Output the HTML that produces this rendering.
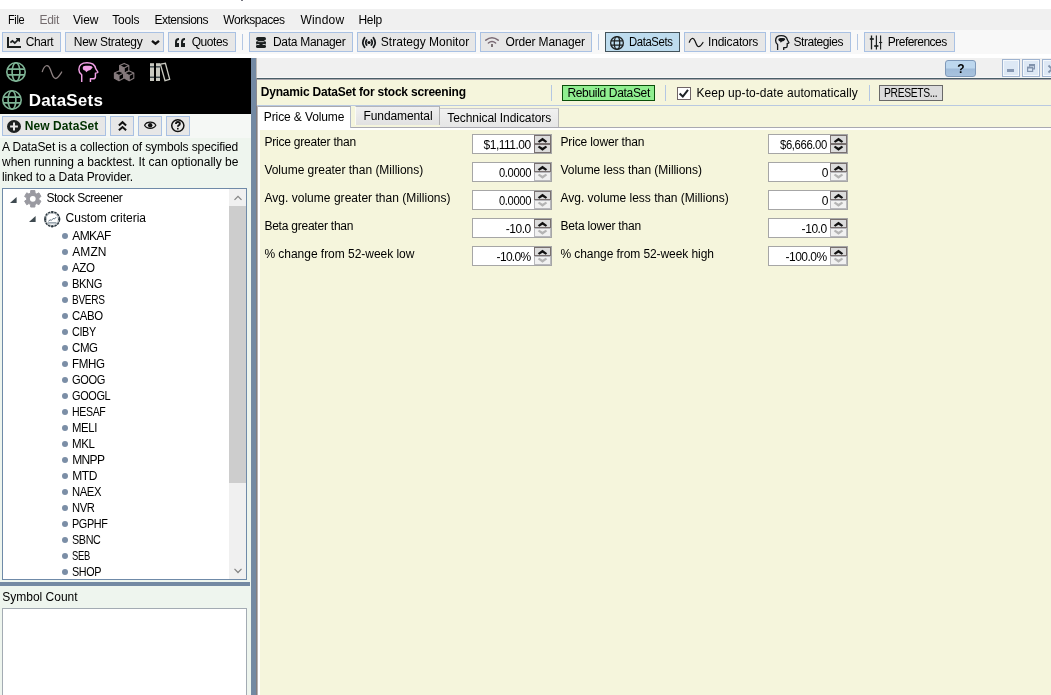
<!DOCTYPE html>
<html lang="en">
<head>
<meta charset="utf-8">
<title>DataSets - Stock Screener</title>
<style>
html,body{margin:0;padding:0}
body{width:1051px;height:695px;position:relative;overflow:hidden;background:#fff;font:12px/16px "Liberation Sans",sans-serif;color:#000}
.a{position:absolute;box-sizing:border-box}
.t{position:absolute;white-space:nowrap;line-height:16px}
.tb{position:absolute;box-sizing:border-box;top:32px;height:20px;border:1px solid #a9c1e3;background:#e7e7e7}
.tb.on{border-color:#43535b;background:#bedcee}
.sep{position:absolute;width:1px;background:#b4c7e3}
.lb{position:absolute;box-sizing:border-box;top:116px;height:20px;border:1px solid #a9c1e3;background:#e7e7e7}
svg{position:absolute;overflow:visible}
.spin{position:absolute;box-sizing:border-box;width:80px;height:20px;border:1px solid #a6a6a6;background:#fff}
.spin i{position:absolute;left:61px;width:17px;height:9px;background:#d4d0c8;box-sizing:border-box}
</style>
</head>
<body>
<div class="a" style="left:241px;top:0;width:2px;height:1px;background:#777780"></div>
<!-- menu bar -->
<div class="a" style="left:0;top:9px;width:1051px;height:21px;background:#f0f0f0"></div>
<!-- main toolbar -->
<div class="a" style="left:0;top:30px;width:1051px;height:24px;background:#f8f8f8"></div>
<div class="tb" style="left:2px;width:59px"></div>
<div class="tb" style="left:65px;width:99px"></div>
<div class="tb" style="left:168px;width:68px"></div>
<div class="sep" style="left:242px;top:34px;height:16px"></div>
<div class="tb" style="left:249px;width:104px"></div>
<div class="tb" style="left:357px;width:119px"></div>
<div class="tb" style="left:480px;width:112px"></div>
<div class="sep" style="left:598px;top:34px;height:16px"></div>
<div class="tb on" style="left:605px;width:75px"></div>
<div class="tb" style="left:684px;width:82px"></div>
<div class="tb" style="left:770px;width:81px"></div>
<div class="sep" style="left:857px;top:34px;height:16px"></div>
<div class="tb" style="left:864px;width:91px"></div>
<svg style="left:7px;top:37px" width="14" height="11" viewBox="0 0 14 11"><path d="M1,0 V10 H14" fill="none" stroke="#1b1f1f" stroke-width="2"/><path d="M3.4,5.6 L5.4,3.8 L7.8,6 L11.2,2.6" fill="none" stroke="#1b1f1f" stroke-width="1.7"/><path d="M9,1 H13 V4.8 H12 L9,1.8 Z" fill="#1b1f1f"/></svg>
<svg style="left:151px;top:40px" width="9" height="5" viewBox="0 0 9 5"><path d="M1,0.9 L4.5,3.7 L8,0.9" fill="none" stroke="#111" stroke-width="2.4"/></svg>
<svg style="left:175px;top:38px" width="10" height="9" viewBox="0 0 10 9"><path d="M0,9 H4 V5 H2 V4 Q2,2 4,2 V0 Q0,0 0,4 Z" fill="#1b1f1f"/><path d="M0,9 H4 V5 H2 V4 Q2,2 4,2 V0 Q0,0 0,4 Z" transform="translate(6,0)" fill="#1b1f1f"/></svg>
<svg style="left:256px;top:37px" width="10" height="11" viewBox="0 0 10 11"><g fill="#1b1f1f"><rect x="0" y="0" width="10" height="3.5" rx="1.7"/><rect x="1.8" y="3" width="6.4" height="1"/><rect x="0" y="4.3" width="10" height="2.9" rx="1.2"/><rect x="0.6" y="7" width="8.8" height="1"/><rect x="0" y="7.7" width="10" height="3.3" rx="1.6"/></g><rect x="2.2" y="4.4" width="5.6" height="0.7" fill="#e0e0e0"/><rect x="0.8" y="7.1" width="2.6" height="0.8" fill="#f0f0f0"/><rect x="6.6" y="7.1" width="2.6" height="0.8" fill="#f0f0f0"/></svg>
<svg style="left:362px;top:37px" width="14" height="11" viewBox="0 0 14 11"><circle cx="7" cy="5.5" r="1.6" fill="#111"/><g fill="none" stroke="#16191b" stroke-width="1.75" stroke-linecap="round"><path d="M4.6,3 Q3,5.5 4.6,8"/><path d="M9.4,3 Q11,5.5 9.4,8"/><path d="M2.6,0.7 Q-0.9,5.5 2.6,10.3"/><path d="M11.4,0.7 Q14.9,5.5 11.4,10.3"/></g></svg>
<svg style="left:485px;top:37px" width="14" height="10" viewBox="0 0 14 10"><g fill="none" stroke="#7a6a74" stroke-width="1.5" stroke-linecap="round"><path d="M0.8,3.2 Q7,-1.8 13.2,3.2"/><path d="M3.4,6 Q7,3 10.6,6"/></g><rect x="6.1" y="7" width="1.8" height="3" fill="#6f6468"/></svg>
<svg style="left:610px;top:35.5px" width="14" height="14" viewBox="0 0 14 14"><g fill="none" stroke="#1d2020" stroke-width="1.3"><circle cx="7.0" cy="7.0" r="6.35"/><ellipse cx="7.0" cy="7.0" rx="2.73" ry="6.35"/><path d="M0.84,4.970000000000001H13.16M0.84,9.03H13.16"/></g></svg>
<svg style="left:689px;top:38px" width="14.3" height="9" viewBox="0 0 14.3 9"><path d="M0.3,4.2299999999999995 C1.716,0.0 4.29,-1.08 6.006,2.88 C7.436000000000001,6.4799999999999995 8.58,10.080000000000002 11.154000000000002,8.1 C12.298,7.2 13.299000000000001,5.58 14.0,4.5" fill="none" stroke="#111" stroke-width="1.25" stroke-linecap="round"/></svg>
<svg style="left:775px;top:35px" width="14" height="15" viewBox="0 0 14 15"><g transform="scale(1.0,1.0)"><path d="M2.6,15 V9.6 Q0.6,8 0.6,5.6 Q0.6,0.6 6.3,0.6 Q11.6,0.6 12.4,5 L13.9,7.5 Q14,8.2 12.2,8.4 V11 Q12.2,12.6 10.6,12.6 H8.7 V15" fill="none" stroke="#16191b" stroke-width="1.3" stroke-linejoin="round"/><path d="M3.3,4.6 Q3.3,2.9 5.4,2.9 H8 Q10,2.9 10.3,4.2 Q9,6.4 7,6.5 L5.7,7.7 L5.2,6.5 Q3.3,6.3 3.3,4.6 Z" fill="#16191b"/></g></svg>
<svg style="left:869px;top:35px" width="14" height="15" viewBox="0 0 14 15"><g stroke="#1b1f1f" fill="none"><path d="M2.5,0.5V14.4" stroke-width="1.3"/><path d="M7.4,0.5V14.4" stroke-width="1.2"/><path d="M11.6,0.5V14.4" stroke-width="1.1"/><path d="M0.8,4H4.8" stroke-width="1.7"/><path d="M5.2,11H9.4" stroke-width="1.7"/><path d="M10,7.5H13.2" stroke-width="1.1"/></g></svg>

<!-- left panel -->
<div class="a" style="left:0;top:58px;width:251px;height:56px;background:#000"></div>
<div class="a" style="left:0;top:114px;width:251px;height:24px;background:#f5f8f5"></div>
<div class="a" style="left:0;top:138px;width:251px;height:557px;background:#eef5ee"></div>
<div class="lb" style="left:2px;width:104px"></div>
<div class="lb" style="left:110px;width:24px"></div>
<div class="lb" style="left:138px;width:24px"></div>
<div class="lb" style="left:166px;width:24px"></div>
<svg style="left:6px;top:62px" width="20" height="20" viewBox="0 0 20 20"><g fill="none" stroke="#7fb596" stroke-width="1.6"><circle cx="10.0" cy="10.0" r="9.2"/><ellipse cx="10.0" cy="10.0" rx="3.9" ry="9.2"/><path d="M1.2,7.1H18.8M1.2,12.9H18.8"/></g></svg>
<svg style="left:42px;top:65px" width="20" height="14" viewBox="0 0 20 14"><path d="M0.3,6.58 C2.4,0.0 6.0,-1.68 8.4,4.48 C10.4,10.08 12.0,15.680000000000001 15.600000000000001,12.6 C17.2,11.200000000000001 18.6,8.68 19.7,7.0" fill="none" stroke="#8e8282" stroke-width="1.3" stroke-linecap="round"/></svg>
<svg style="left:78px;top:62px" width="20" height="20" viewBox="0 0 20 20"><g transform="scale(1.4285714285714286,1.3333333333333333)"><path d="M2.6,15 V9.6 Q0.6,8 0.6,5.6 Q0.6,0.6 6.3,0.6 Q11.6,0.6 12.4,5 L13.9,7.5 Q14,8.2 12.2,8.4 V11 Q12.2,12.6 10.6,12.6 H8.7 V15" fill="none" stroke="#f2a0e6" stroke-width="1.0150000000000001" stroke-linejoin="round"/><path d="M3.3,4.6 Q3.3,2.9 5.4,2.9 H8 Q10,2.9 10.3,4.2 Q9,6.4 7,6.5 L5.7,7.7 L5.2,6.5 Q3.3,6.3 3.3,4.6 Z" fill="#f2a0e6"/></g></svg>
<svg style="left:114px;top:63px" width="20" height="18" viewBox="0 0 20 18"><path d="M10.2,0.4 L14.799999999999999,2.6 V7.8 L10.2,10.2 L5.6,7.8 V2.6 Z" fill="#000"/><path d="M5.6,2.6 L10.2,5 V10.2 L5.6,7.8 Z" fill="#857a7c"/><path d="M10.2,0.4 L14.799999999999999,2.6 V7.8 L10.2,10.2 L5.6,7.8 V2.6 Z M5.6,2.6 L10.2,5 L14.799999999999999,2.6 M10.2,5 V10.2" fill="none" stroke="#857a7c" stroke-width="1.1" stroke-linejoin="round"/><path d="M5,7.9 L9.6,10.1 V15.3 L5,17.7 L0.40000000000000036,15.3 V10.1 Z" fill="#000"/><path d="M0.40000000000000036,10.1 L5,12.5 V17.7 L0.40000000000000036,15.3 Z" fill="#857a7c"/><path d="M5,7.9 L9.6,10.1 V15.3 L5,17.7 L0.40000000000000036,15.3 V10.1 Z M0.40000000000000036,10.1 L5,12.5 L9.6,10.1 M5,12.5 V17.7" fill="none" stroke="#857a7c" stroke-width="1.1" stroke-linejoin="round"/><path d="M15.2,7.9 L19.799999999999997,10.1 V15.3 L15.2,17.7 L10.6,15.3 V10.1 Z" fill="#000"/><path d="M10.6,10.1 L15.2,12.5 V17.7 L10.6,15.3 Z" fill="#857a7c"/><path d="M15.2,7.9 L19.799999999999997,10.1 V15.3 L15.2,17.7 L10.6,15.3 V10.1 Z M10.6,10.1 L15.2,12.5 L19.799999999999997,10.1 M15.2,12.5 V17.7" fill="none" stroke="#857a7c" stroke-width="1.1" stroke-linejoin="round"/></svg>
<svg style="left:150px;top:63px" width="20" height="18" viewBox="0 0 20 18"><rect x="0" y="0.2" width="4" height="17.8" fill="#c9c9c0"/><rect x="0" y="3.2" width="4" height="1.3" fill="#2f3a40"/><rect x="0" y="13.6" width="4" height="1.3" fill="#2f3a40"/><rect x="6" y="0.2" width="4" height="17.8" fill="#c9c9c0"/><rect x="6" y="3.2" width="4" height="1.3" fill="#2f3a40"/><rect x="6" y="13.6" width="4" height="1.3" fill="#2f3a40"/><path d="M10.4,1.2 L15.4,0.3 L19.7,16.4 L15,17.7 Z" fill="none" stroke="#c9c9c0" stroke-width="1.3"/></svg>
<svg style="left:2px;top:90px" width="20" height="20" viewBox="0 0 20 20"><g fill="none" stroke="#7fb596" stroke-width="1.6"><circle cx="10.0" cy="10.0" r="9.2"/><ellipse cx="10.0" cy="10.0" rx="3.9" ry="9.2"/><path d="M1.2,7.1H18.8M1.2,12.9H18.8"/></g></svg>
<svg style="left:7px;top:120px" width="14" height="13" viewBox="0 0 14 13"><ellipse cx="7" cy="6.5" rx="7" ry="6.5" fill="#1d2121"/><path d="M7,2.6V10.4M3.1,6.5H10.9" stroke="#e8e8e8" stroke-width="2"/></svg>
<svg style="left:117.5px;top:120.5px" width="9" height="10" viewBox="0 0 9 10"><path d="M0.9,4.5 L4.5,1.2 L8.1,4.5 M0.9,9.3 L4.5,6 L8.1,9.3" fill="none" stroke="#111" stroke-width="2"/></svg>
<svg style="left:144px;top:121.3px" width="12.4" height="8.4" viewBox="0 0 12.4 8.4"><path d="M0.6,4.2 C2.6,0.1 9.8,0.1 11.8,4.2 C9.8,8.3 2.6,8.3 0.6,4.2 Z" fill="none" stroke="#111" stroke-width="1.25"/><circle cx="6.2" cy="4.2" r="2.2" fill="#111"/></svg>
<svg style="left:171.3px;top:119.4px" width="13.6" height="13.2" viewBox="0 0 13.6 13.2"><ellipse cx="6.8" cy="6.6" rx="6.1" ry="5.9" fill="none" stroke="#111" stroke-width="1.5"/><path d="M4.9,5 Q4.9,3 6.9,3 Q8.9,3 8.9,4.7 Q8.9,5.8 7.6,6.4 Q6.9,6.8 6.9,7.8" fill="none" stroke="#111" stroke-width="1.8"/><rect x="6" y="8.9" width="1.6" height="1.6" fill="#111"/></svg>
<!-- tree -->
<div class="a" style="left:2px;top:188px;width:245px;height:392px;border:1px solid #6f8aa8;background:#fff"></div>
<div class="a" style="left:229px;top:189px;width:17px;height:390px;background:#f0f0f0"></div>
<div class="a" style="left:229px;top:206px;width:17px;height:277px;background:#cdcdcd"></div>
<svg style="left:10.3px;top:197px" width="7" height="6" viewBox="0 0 7 6"><path d="M0,6 H6.6 V0 Z" fill="#3f4a50"/></svg>
<svg style="left:29.4px;top:216px" width="7" height="6" viewBox="0 0 7 6"><path d="M0,6 H6.6 V0 Z" fill="#3f4a50"/></svg>
<svg style="left:24px;top:190.2px" width="17.6" height="17.6" viewBox="0 0 17.6 17.6"><path d="M6.62,3.00 L6.70,0.56 L10.90,0.56 L10.98,3.00 L12.73,4.01 L14.88,2.86 L16.98,6.50 L14.92,7.79 L14.92,9.81 L16.98,11.10 L14.88,14.74 L12.73,13.59 L10.98,14.60 L10.90,17.04 L6.70,17.04 L6.62,14.60 L4.87,13.59 L2.72,14.74 L0.62,11.10 L2.68,9.81 L2.68,7.79 L0.62,6.50 L2.72,2.86 L4.87,4.01 Z" fill="#9a9aa1" stroke="#9a9aa1" stroke-width="1" stroke-linejoin="round"/><circle cx="8.8" cy="8.8" r="2.9" fill="#fff"/></svg>
<svg style="left:43.8px;top:210.8px" width="16.4" height="16.4" viewBox="0 0 16.4 16.4"><circle cx="8.2" cy="8.2" r="7.3" fill="none" stroke="#2f3b43" stroke-width="1.5" stroke-dasharray="2.6 0.7"/><circle cx="8.2" cy="8.2" r="6.2" fill="none" stroke="#7f8b93" stroke-width="0.6"/><path d="M14.20,8.20 L16.20,8.20" stroke="#26323a" stroke-width="1.5"/><path d="M8.20,14.20 L8.20,16.20" stroke="#26323a" stroke-width="1.5"/><path d="M2.20,8.20 L0.20,8.20" stroke="#26323a" stroke-width="1.5"/><path d="M8.20,2.20 L8.20,0.20" stroke="#26323a" stroke-width="1.5"/><path d="M4.4,10.2 L6.2,8.8 L7.3,9.5 L9.2,7.4 L10.4,8 L12.2,6.1" fill="none" stroke="#4a6070" stroke-width="0.9"/><path d="M4.2,11.9 H12.4" stroke="#4a6070" stroke-width="0.9"/></svg>
<div class="a" style="left:62px;top:233px;width:6px;height:6px;border-radius:50%;background:#7b8ea6"></div>
<div class="a" style="left:62px;top:249px;width:6px;height:6px;border-radius:50%;background:#7b8ea6"></div>
<div class="a" style="left:62px;top:265px;width:6px;height:6px;border-radius:50%;background:#7b8ea6"></div>
<div class="a" style="left:62px;top:281px;width:6px;height:6px;border-radius:50%;background:#7b8ea6"></div>
<div class="a" style="left:62px;top:297px;width:6px;height:6px;border-radius:50%;background:#7b8ea6"></div>
<div class="a" style="left:62px;top:313px;width:6px;height:6px;border-radius:50%;background:#7b8ea6"></div>
<div class="a" style="left:62px;top:329px;width:6px;height:6px;border-radius:50%;background:#7b8ea6"></div>
<div class="a" style="left:62px;top:345px;width:6px;height:6px;border-radius:50%;background:#7b8ea6"></div>
<div class="a" style="left:62px;top:361px;width:6px;height:6px;border-radius:50%;background:#7b8ea6"></div>
<div class="a" style="left:62px;top:377px;width:6px;height:6px;border-radius:50%;background:#7b8ea6"></div>
<div class="a" style="left:62px;top:393px;width:6px;height:6px;border-radius:50%;background:#7b8ea6"></div>
<div class="a" style="left:62px;top:409px;width:6px;height:6px;border-radius:50%;background:#7b8ea6"></div>
<div class="a" style="left:62px;top:425px;width:6px;height:6px;border-radius:50%;background:#7b8ea6"></div>
<div class="a" style="left:62px;top:441px;width:6px;height:6px;border-radius:50%;background:#7b8ea6"></div>
<div class="a" style="left:62px;top:457px;width:6px;height:6px;border-radius:50%;background:#7b8ea6"></div>
<div class="a" style="left:62px;top:473px;width:6px;height:6px;border-radius:50%;background:#7b8ea6"></div>
<div class="a" style="left:62px;top:489px;width:6px;height:6px;border-radius:50%;background:#7b8ea6"></div>
<div class="a" style="left:62px;top:505px;width:6px;height:6px;border-radius:50%;background:#7b8ea6"></div>
<div class="a" style="left:62px;top:521px;width:6px;height:6px;border-radius:50%;background:#7b8ea6"></div>
<div class="a" style="left:62px;top:537px;width:6px;height:6px;border-radius:50%;background:#7b8ea6"></div>
<div class="a" style="left:62px;top:553px;width:6px;height:6px;border-radius:50%;background:#7b8ea6"></div>
<div class="a" style="left:62px;top:569px;width:6px;height:6px;border-radius:50%;background:#7b8ea6"></div>
<svg style="left:233.5px;top:195px" width="8" height="6" viewBox="0 0 8 6"><path d="M0.5,4.9 L4,1.3 L7.5,4.9" fill="none" stroke="#858585" stroke-width="1.25"/></svg>
<svg style="left:233.5px;top:568px" width="8" height="6" viewBox="0 0 8 6"><path d="M0.5,0.9 L4,4.5 L7.5,0.9" fill="none" stroke="#858585" stroke-width="1.25"/></svg>
<!-- splitters -->
<div class="a" style="left:0;top:581.6px;width:250px;height:4.6px;background:#7389a3"></div>
<div class="a" style="left:251px;top:58px;width:5px;height:637px;background:#7389a3"></div>
<div class="a" style="left:256px;top:58px;width:1px;height:20px;background:#bdb9b6"></div>
<div class="a" style="left:256px;top:78px;width:1px;height:28px;background:#8c8a90"></div>
<div class="a" style="left:256px;top:106px;width:1px;height:589px;background:#837d80"></div>
<!-- symbol count box -->
<div class="a" style="left:2px;top:608px;width:245px;height:100px;border:1px solid #a3abb3;background:#fff"></div>

<!-- right panel -->
<div class="a" style="left:257px;top:58px;width:794px;height:20px;background:#f0f0f0"></div>
<div class="a" style="left:257px;top:77px;width:794px;height:1px;background:#f7f7f7"></div>
<div class="a" style="left:257px;top:78px;width:794px;height:1px;background:#4a5e68"></div>
<div class="a" style="left:257px;top:79px;width:794px;height:616px;background:#f5f5dc"></div>
<div class="a" style="left:257px;top:79px;width:794px;height:1px;background:#a9a7ad"></div>
<div class="a" style="left:257px;top:105px;width:794px;height:1px;background:#b9c9e1"></div>
<div class="a" style="left:257px;top:127px;width:794px;height:1px;background:#a9a9b1"></div>
<div class="a" style="left:257px;top:128px;width:794px;height:2px;background:#fff"></div>
<div class="a" style="left:257px;top:106px;width:3px;height:589px;background:#fff"></div>
<!-- mdi buttons -->
<div class="a" style="left:945px;top:60px;width:31px;height:17px;border:1px solid #7f99b9;border-radius:3px;background:linear-gradient(#bdd7ee 0,#bdd7ee 48%,#9fbbd9 52%,#a9c3df 100%)"></div>
<div class="a" style="left:1002px;top:59px;width:18px;height:18px;border:1px solid #9fb3cf;background:#dde8f5;box-shadow:inset 0 0 0 1px #f4f8fc"></div>
<div class="a" style="left:1022px;top:59px;width:18px;height:18px;border:1px solid #9fb3cf;background:#dde8f5;box-shadow:inset 0 0 0 1px #f4f8fc"></div>
<div class="a" style="left:1042px;top:59px;width:18px;height:18px;border:1px solid #9fb3cf;background:#dde8f5;box-shadow:inset 0 0 0 1px #f4f8fc"></div>
<!-- header strip items -->
<div class="sep" style="left:551px;top:85px;height:16px"></div>
<div class="a" style="left:562px;top:85px;width:93px;height:16px;border:1px solid #0a4f0a;background:#90ee90"></div>
<div class="sep" style="left:665px;top:85px;height:16px"></div>
<div class="a" style="left:677px;top:87px;width:14px;height:13px;border:1px solid #6e6466;background:#fff"></div>
<div class="sep" style="left:869px;top:85px;height:16px"></div>
<div class="a" style="left:879px;top:85px;width:64px;height:16px;border:1px solid #696969;background:#dcdcdc"></div>
<!-- tabs -->
<div class="a" style="left:355px;top:106px;width:85px;height:19px;border-top:1px solid #b4b6bd;border-left:1px solid #fbfbf3;border-right:1px solid #b1b1b1;background:linear-gradient(#f0f0f0,#e1e1e1)"></div>
<div class="a" style="left:440px;top:108px;width:119px;height:19px;border-top:1px solid #c9c9cd;border-right:1px solid #b8b8b8;background:linear-gradient(#f1f1f1,#e6e6e6)"></div>
<div class="a" style="left:257px;top:106px;width:94px;height:22px;border-right:1px solid #b3bac8;border-top:1px solid #a9a9ad;background:#fff"></div>
<div class="a" style="left:257px;top:106px;width:1px;height:589px;background:#b5b1b3"></div>
<div class="spin" style="left:472px;top:134px"><div class="a" style="left:61px;top:0;width:17px;height:9px;border:1px solid #787070;background:#dcdcdc"></div><div class="a" style="left:61px;top:9px;width:17px;height:9px;border:1px solid #787070;background:#dcdcdc"></div><svg style="left:65px;top:2.8px" width="9" height="4.4" viewBox="0 0 9 4.4"><path d="M-0.2,3.2 L4.5,-0.3 L9.2,3.2 L7.8,4.7 L4.5,2.7 L1.2,4.7 Z" fill="#111"/></svg><svg style="left:65px;top:10.8px" width="9" height="4.4" viewBox="0 0 9 4.4"><path d="M-0.2,1.2 L4.5,4.7 L9.2,1.2 L7.8,-0.3 L4.5,1.7 L1.2,-0.3 Z" fill="#111"/></svg></div>
<div class="spin" style="left:472px;top:162px"><div class="a" style="left:61px;top:0;width:17px;height:9px;border:1px solid #787070;background:#dcdcdc"></div><div class="a" style="left:61px;top:9px;width:17px;height:9px;border:1px solid #b9b9bd;background:#f1f1f1"></div><svg style="left:65px;top:2.8px" width="9" height="4.4" viewBox="0 0 9 4.4"><path d="M-0.2,3.2 L4.5,-0.3 L9.2,3.2 L7.8,4.7 L4.5,2.7 L1.2,4.7 Z" fill="#111"/></svg><svg style="left:65px;top:10.8px" width="9" height="4.4" viewBox="0 0 9 4.4"><path d="M-0.2,1.2 L4.5,4.7 L9.2,1.2 L7.8,-0.3 L4.5,1.7 L1.2,-0.3 Z" fill="#b4b4b4"/></svg></div>
<div class="spin" style="left:472px;top:190px"><div class="a" style="left:61px;top:0;width:17px;height:9px;border:1px solid #787070;background:#dcdcdc"></div><div class="a" style="left:61px;top:9px;width:17px;height:9px;border:1px solid #b9b9bd;background:#f1f1f1"></div><svg style="left:65px;top:2.8px" width="9" height="4.4" viewBox="0 0 9 4.4"><path d="M-0.2,3.2 L4.5,-0.3 L9.2,3.2 L7.8,4.7 L4.5,2.7 L1.2,4.7 Z" fill="#111"/></svg><svg style="left:65px;top:10.8px" width="9" height="4.4" viewBox="0 0 9 4.4"><path d="M-0.2,1.2 L4.5,4.7 L9.2,1.2 L7.8,-0.3 L4.5,1.7 L1.2,-0.3 Z" fill="#b4b4b4"/></svg></div>
<div class="spin" style="left:472px;top:218px"><div class="a" style="left:61px;top:0;width:17px;height:9px;border:1px solid #787070;background:#dcdcdc"></div><div class="a" style="left:61px;top:9px;width:17px;height:9px;border:1px solid #b9b9bd;background:#f1f1f1"></div><svg style="left:65px;top:2.8px" width="9" height="4.4" viewBox="0 0 9 4.4"><path d="M-0.2,3.2 L4.5,-0.3 L9.2,3.2 L7.8,4.7 L4.5,2.7 L1.2,4.7 Z" fill="#111"/></svg><svg style="left:65px;top:10.8px" width="9" height="4.4" viewBox="0 0 9 4.4"><path d="M-0.2,1.2 L4.5,4.7 L9.2,1.2 L7.8,-0.3 L4.5,1.7 L1.2,-0.3 Z" fill="#b4b4b4"/></svg></div>
<div class="spin" style="left:472px;top:246px"><div class="a" style="left:61px;top:0;width:17px;height:9px;border:1px solid #787070;background:#dcdcdc"></div><div class="a" style="left:61px;top:9px;width:17px;height:9px;border:1px solid #b9b9bd;background:#f1f1f1"></div><svg style="left:65px;top:2.8px" width="9" height="4.4" viewBox="0 0 9 4.4"><path d="M-0.2,3.2 L4.5,-0.3 L9.2,3.2 L7.8,4.7 L4.5,2.7 L1.2,4.7 Z" fill="#111"/></svg><svg style="left:65px;top:10.8px" width="9" height="4.4" viewBox="0 0 9 4.4"><path d="M-0.2,1.2 L4.5,4.7 L9.2,1.2 L7.8,-0.3 L4.5,1.7 L1.2,-0.3 Z" fill="#b4b4b4"/></svg></div>
<div class="spin" style="left:768px;top:134px"><div class="a" style="left:61px;top:0;width:17px;height:9px;border:1px solid #787070;background:#dcdcdc"></div><div class="a" style="left:61px;top:9px;width:17px;height:9px;border:1px solid #787070;background:#dcdcdc"></div><svg style="left:65px;top:2.8px" width="9" height="4.4" viewBox="0 0 9 4.4"><path d="M-0.2,3.2 L4.5,-0.3 L9.2,3.2 L7.8,4.7 L4.5,2.7 L1.2,4.7 Z" fill="#111"/></svg><svg style="left:65px;top:10.8px" width="9" height="4.4" viewBox="0 0 9 4.4"><path d="M-0.2,1.2 L4.5,4.7 L9.2,1.2 L7.8,-0.3 L4.5,1.7 L1.2,-0.3 Z" fill="#111"/></svg></div>
<div class="spin" style="left:768px;top:162px"><div class="a" style="left:61px;top:0;width:17px;height:9px;border:1px solid #787070;background:#dcdcdc"></div><div class="a" style="left:61px;top:9px;width:17px;height:9px;border:1px solid #b9b9bd;background:#f1f1f1"></div><svg style="left:65px;top:2.8px" width="9" height="4.4" viewBox="0 0 9 4.4"><path d="M-0.2,3.2 L4.5,-0.3 L9.2,3.2 L7.8,4.7 L4.5,2.7 L1.2,4.7 Z" fill="#111"/></svg><svg style="left:65px;top:10.8px" width="9" height="4.4" viewBox="0 0 9 4.4"><path d="M-0.2,1.2 L4.5,4.7 L9.2,1.2 L7.8,-0.3 L4.5,1.7 L1.2,-0.3 Z" fill="#b4b4b4"/></svg></div>
<div class="spin" style="left:768px;top:190px"><div class="a" style="left:61px;top:0;width:17px;height:9px;border:1px solid #787070;background:#dcdcdc"></div><div class="a" style="left:61px;top:9px;width:17px;height:9px;border:1px solid #b9b9bd;background:#f1f1f1"></div><svg style="left:65px;top:2.8px" width="9" height="4.4" viewBox="0 0 9 4.4"><path d="M-0.2,3.2 L4.5,-0.3 L9.2,3.2 L7.8,4.7 L4.5,2.7 L1.2,4.7 Z" fill="#111"/></svg><svg style="left:65px;top:10.8px" width="9" height="4.4" viewBox="0 0 9 4.4"><path d="M-0.2,1.2 L4.5,4.7 L9.2,1.2 L7.8,-0.3 L4.5,1.7 L1.2,-0.3 Z" fill="#b4b4b4"/></svg></div>
<div class="spin" style="left:768px;top:218px"><div class="a" style="left:61px;top:0;width:17px;height:9px;border:1px solid #787070;background:#dcdcdc"></div><div class="a" style="left:61px;top:9px;width:17px;height:9px;border:1px solid #b9b9bd;background:#f1f1f1"></div><svg style="left:65px;top:2.8px" width="9" height="4.4" viewBox="0 0 9 4.4"><path d="M-0.2,3.2 L4.5,-0.3 L9.2,3.2 L7.8,4.7 L4.5,2.7 L1.2,4.7 Z" fill="#111"/></svg><svg style="left:65px;top:10.8px" width="9" height="4.4" viewBox="0 0 9 4.4"><path d="M-0.2,1.2 L4.5,4.7 L9.2,1.2 L7.8,-0.3 L4.5,1.7 L1.2,-0.3 Z" fill="#b4b4b4"/></svg></div>
<div class="spin" style="left:768px;top:246px"><div class="a" style="left:61px;top:0;width:17px;height:9px;border:1px solid #787070;background:#dcdcdc"></div><div class="a" style="left:61px;top:9px;width:17px;height:9px;border:1px solid #b9b9bd;background:#f1f1f1"></div><svg style="left:65px;top:2.8px" width="9" height="4.4" viewBox="0 0 9 4.4"><path d="M-0.2,3.2 L4.5,-0.3 L9.2,3.2 L7.8,4.7 L4.5,2.7 L1.2,4.7 Z" fill="#111"/></svg><svg style="left:65px;top:10.8px" width="9" height="4.4" viewBox="0 0 9 4.4"><path d="M-0.2,1.2 L4.5,4.7 L9.2,1.2 L7.8,-0.3 L4.5,1.7 L1.2,-0.3 Z" fill="#b4b4b4"/></svg></div>
<svg style="left:679px;top:89px" width="10" height="9" viewBox="0 0 10 9"><path d="M0.6,4.6 L3.8,7.6 L9,0.8" fill="none" stroke="#1c2226" stroke-width="2"/></svg>
<div class="a" style="left:1007px;top:69px;width:7px;height:3px;background:#8798b3"></div>
<svg style="left:1027px;top:64px" width="8" height="8" viewBox="0 0 8 8"><g fill="none" stroke="#8193ad" stroke-width="1.2"><path d="M2.6,2.8 V0.7 H7.4 V4.8 H5.6"/><path d="M2.6,1.3 H7.4" stroke-width="1.4"/><rect x="0.6" y="3.2" width="5" height="4.2"/><path d="M0.6,3.8 H5.6" stroke-width="1.4"/></g></svg>
<svg style="left:1047.5px;top:64.5px" width="8" height="8" viewBox="0 0 8 8"><path d="M0.5,0.5 L7.5,7.5 M7.5,0.5 L0.5,7.5" stroke="#7f91ab" stroke-width="1.8"/></svg>
<div class="a" style="left:0;top:0;width:1051px;height:695px;will-change:transform">
<span class="t" style="left:7.6px;top:12.0px;letter-spacing:-0.40px;transform:scaleX(0.915);transform-origin:0 0">File</span>
<span class="t" style="left:39.4px;top:12.0px;letter-spacing:-0.23px;color:#746c6e">Edit</span>
<span class="t" style="left:72.9px;top:12.0px;letter-spacing:-0.10px">View</span>
<span class="t" style="left:112.3px;top:12.0px;letter-spacing:-0.20px">Tools</span>
<span class="t" style="left:154.5px;top:12.0px;letter-spacing:-0.52px">Extensions</span>
<span class="t" style="left:223.3px;top:12.0px;letter-spacing:-0.45px">Workspaces</span>
<span class="t" style="left:300.4px;top:12.0px;letter-spacing:0.20px">Window</span>
<span class="t" style="left:358.4px;top:12.0px;letter-spacing:-0.30px">Help</span>
<span class="t" style="left:25.8px;top:34.0px;letter-spacing:-0.39px">Chart</span>
<span class="t" style="left:73.8px;top:34.0px;letter-spacing:-0.28px">New Strategy</span>
<span class="t" style="left:191.7px;top:34.0px;letter-spacing:-0.42px">Quotes</span>
<span class="t" style="left:273.0px;top:34.0px;letter-spacing:-0.30px">Data Manager</span>
<span class="t" style="left:380.8px;top:34.0px;letter-spacing:0.02px">Strategy Monitor</span>
<span class="t" style="left:505.5px;top:34.0px;letter-spacing:-0.16px">Order Manager</span>
<span class="t" style="left:628.7px;top:34.0px;letter-spacing:-0.40px;transform:scaleX(0.941);transform-origin:0 0">DataSets</span>
<span class="t" style="left:708.0px;top:34.0px;letter-spacing:-0.19px">Indicators</span>
<span class="t" style="left:793.5px;top:34.0px;letter-spacing:-0.45px">Strategies</span>
<span class="t" style="left:887.8px;top:34.0px;letter-spacing:-0.53px">Preferences</span>
<span class="t" style="left:28.7px;top:90.0px;letter-spacing:0.20px;font-size:17px;line-height:22px;font-weight:700;color:#fff">DataSets</span>
<span class="t" style="left:24.7px;top:117.6px;letter-spacing:0.09px;font-weight:700;color:#003000">New DataSet</span>
<span class="t" style="left:2.0px;top:139.0px;letter-spacing:-0.10px">A DataSet is a collection of symbols specified</span>
<span class="t" style="left:2.0px;top:154.0px;letter-spacing:-0.01px">when running a backtest. It can optionally be</span>
<span class="t" style="left:2.0px;top:169.0px;letter-spacing:-0.12px">linked to a Data Provider.</span>
<span class="t" style="left:46.4px;top:189.7px;letter-spacing:-0.43px">Stock Screener</span>
<span class="t" style="left:65.6px;top:209.7px;letter-spacing:-0.02px">Custom criteria</span>
<span class="t" style="left:72.2px;top:227.5px;letter-spacing:-0.56px">AMKAF</span>
<span class="t" style="left:72.2px;top:243.5px;letter-spacing:0.10px">AMZN</span>
<span class="t" style="left:72.2px;top:259.5px;letter-spacing:-0.40px;transform:scaleX(0.963);transform-origin:0 0">AZO</span>
<span class="t" style="left:72.2px;top:275.5px;letter-spacing:-0.40px;transform:scaleX(0.926);transform-origin:0 0">BKNG</span>
<span class="t" style="left:72.2px;top:291.5px;letter-spacing:-0.40px;transform:scaleX(0.842);transform-origin:0 0">BVERS</span>
<span class="t" style="left:72.2px;top:307.5px;letter-spacing:-0.40px;transform:scaleX(0.948);transform-origin:0 0">CABO</span>
<span class="t" style="left:72.2px;top:323.5px;letter-spacing:-0.40px;transform:scaleX(0.902);transform-origin:0 0">CIBY</span>
<span class="t" style="left:72.2px;top:339.5px;letter-spacing:-0.40px;transform:scaleX(0.956);transform-origin:0 0">CMG</span>
<span class="t" style="left:72.2px;top:355.5px;letter-spacing:-0.40px;transform:scaleX(0.964);transform-origin:0 0">FMHG</span>
<span class="t" style="left:72.2px;top:371.5px;letter-spacing:-0.40px;transform:scaleX(0.924);transform-origin:0 0">GOOG</span>
<span class="t" style="left:72.2px;top:387.5px;letter-spacing:-0.40px;transform:scaleX(0.912);transform-origin:0 0">GOOGL</span>
<span class="t" style="left:72.2px;top:403.5px;letter-spacing:-0.40px;transform:scaleX(0.880);transform-origin:0 0">HESAF</span>
<span class="t" style="left:72.2px;top:419.5px;letter-spacing:-0.40px;transform:scaleX(0.943);transform-origin:0 0">MELI</span>
<span class="t" style="left:72.2px;top:435.5px;letter-spacing:-0.40px;transform:scaleX(0.959);transform-origin:0 0">MKL</span>
<span class="t" style="left:72.2px;top:451.5px;letter-spacing:-0.62px">MNPP</span>
<span class="t" style="left:72.2px;top:467.5px;letter-spacing:-0.35px">MTD</span>
<span class="t" style="left:72.2px;top:483.5px;letter-spacing:-0.40px;transform:scaleX(0.937);transform-origin:0 0">NAEX</span>
<span class="t" style="left:72.2px;top:499.5px;letter-spacing:-0.40px;transform:scaleX(0.933);transform-origin:0 0">NVR</span>
<span class="t" style="left:72.2px;top:515.5px;letter-spacing:-0.40px;transform:scaleX(0.903);transform-origin:0 0">PGPHF</span>
<span class="t" style="left:72.2px;top:531.5px;letter-spacing:-0.40px;transform:scaleX(0.896);transform-origin:0 0">SBNC</span>
<span class="t" style="left:72.2px;top:547.5px;letter-spacing:-0.40px;transform:scaleX(0.784);transform-origin:0 0">SEB</span>
<span class="t" style="left:72.2px;top:563.5px;letter-spacing:-0.40px;transform:scaleX(0.899);transform-origin:0 0">SHOP</span>
<span class="t" style="left:2.3px;top:588.5px;letter-spacing:-0.01px">Symbol Count</span>
<span class="t" style="left:260.8px;top:84.0px;letter-spacing:-0.20px;font-weight:700">Dynamic DataSet for stock screening</span>
<span class="t" style="left:567.4px;top:84.5px;letter-spacing:-0.32px">Rebuild DataSet</span>
<span class="t" style="left:696.4px;top:84.5px;letter-spacing:0.07px">Keep up-to-date automatically</span>
<span class="t" style="left:884.4px;top:84.8px;letter-spacing:-0.40px;transform:scaleX(0.859);transform-origin:0 0">PRESETS...</span>
<span class="t" style="left:263.8px;top:108.5px;letter-spacing:-0.11px">Price &amp; Volume</span>
<span class="t" style="left:363.5px;top:107.5px;letter-spacing:-0.10px">Fundamental</span>
<span class="t" style="left:447.3px;top:109.5px;letter-spacing:-0.08px">Technical Indicators</span>
<span class="t" style="left:264.4px;top:134.0px;letter-spacing:-0.21px">Price greater than</span>
<span class="t" style="left:264.4px;top:162.0px;letter-spacing:-0.02px">Volume greater than (Millions)</span>
<span class="t" style="left:264.4px;top:190.0px;letter-spacing:0.03px">Avg. volume greater than (Millions)</span>
<span class="t" style="left:264.4px;top:218.0px;letter-spacing:-0.23px">Beta greater than</span>
<span class="t" style="left:264.4px;top:246.0px;letter-spacing:-0.03px">% change from 52-week low</span>
<span class="t" style="left:560.5px;top:134.0px;letter-spacing:-0.14px">Price lower than</span>
<span class="t" style="left:560.5px;top:162.0px;letter-spacing:-0.05px">Volume less than (Millions)</span>
<span class="t" style="left:560.5px;top:190.0px;letter-spacing:-0.01px">Avg. volume less than (Millions)</span>
<span class="t" style="left:560.5px;top:218.0px;letter-spacing:-0.20px">Beta lower than</span>
<span class="t" style="left:560.5px;top:246.0px;letter-spacing:-0.08px">% change from 52-week high</span>
<span class="t" style="left:483.6px;top:137.0px;letter-spacing:-0.50px">$1,111.00</span>
<span class="t" style="left:498.8px;top:165.0px;letter-spacing:-0.40px;transform:scaleX(0.934);transform-origin:0 0">0.0000</span>
<span class="t" style="left:498.8px;top:193.0px;letter-spacing:-0.40px;transform:scaleX(0.934);transform-origin:0 0">0.0000</span>
<span class="t" style="left:505.8px;top:221.0px;letter-spacing:-0.49px">-10.0</span>
<span class="t" style="left:496.6px;top:249.0px;letter-spacing:-0.69px">-10.0%</span>
<span class="t" style="left:779.9px;top:137.0px;letter-spacing:-0.40px;transform:scaleX(0.942);transform-origin:0 0">$6,666.00</span>
<span class="t" style="left:821.8px;top:165.0px;letter-spacing:0.00px">0</span>
<span class="t" style="left:821.8px;top:193.0px;letter-spacing:0.00px">0</span>
<span class="t" style="left:801.6px;top:221.0px;letter-spacing:-0.44px">-10.0</span>
<span class="t" style="left:785.5px;top:249.0px;letter-spacing:-0.50px">-100.0%</span>
<span class="t" style="left:957.3px;top:61px;font-weight:700">?</span>
</div>
</body>
</html>
